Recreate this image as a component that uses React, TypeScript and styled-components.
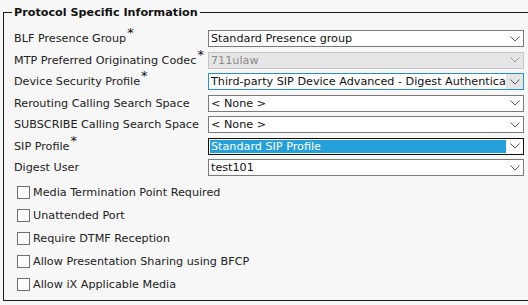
import React from "react";
import styled, { createGlobalStyle } from "styled-components";

const Global = createGlobalStyle`
  html, body {
    margin: 0;
    padding: 0;
    background: #f7f7f7;
    overflow: hidden;
  }
  body {
    font-family: "DejaVu Sans", Verdana, sans-serif;
    font-size: 11.2px;
    color: #222;
  }
`;

const Page = styled.div`
  width: 528px;
  height: 305px;
  overflow: hidden;
  background: #f7f7f7;
`;

const Fieldset = styled.fieldset`
  margin: 6px 0 0 3px;
  padding: 11px 0 4px 10px;
  width: 560px;
  border: 1px solid #1a1a1a;
  border-right: none;
  box-sizing: border-box;
  min-inline-size: 0;
`;

const Legend = styled.legend`
  margin-left: -2px;
  padding: 0 2px;
  font-weight: bold;
  font-size: 11.2px;
  color: #111;
  line-height: 13px;
`;

const Grid = styled.div`
  display: grid;
  grid-template-columns: 194px 316px;
  row-gap: 4.5px;
  align-items: center;
`;

const Label = styled.div`
  line-height: 17px;
  white-space: nowrap;
  color: #222;
`;

const Req = styled.span`
  display: inline-block;
  font-size: 13px;
  line-height: 0;
  vertical-align: 5px;
  margin-left: 1px;
  color: #111;
`;

type Variant = "normal" | "disabled" | "focused" | "selected";

const Box = styled.div<{ $v: Variant }>`
  position: relative;
  height: 17px;
  box-sizing: border-box;
  display: flex;
  align-items: center;
  border: 1px solid
    ${(p) =>
      p.$v === "disabled"
        ? "#c4c4c4"
        : p.$v === "focused"
        ? "#2a8fd0"
        : p.$v === "selected"
        ? "#111"
        : "#7a7a7a"};
  background: ${(p) => (p.$v === "disabled" ? "#e6e6e6" : "#fff")};
  overflow: hidden;
`;

const Value = styled.div<{ $v: Variant }>`
  flex: 1;
  min-width: 0;
  height: ${(p) => (p.$v === "selected" ? "13px" : "15px")};
  line-height: ${(p) => (p.$v === "selected" ? "13px" : "15px")};
  margin-left: ${(p) => (p.$v === "selected" ? "1px" : "0")};
  padding-left: ${(p) => (p.$v === "selected" ? "1px" : "2px")};
  white-space: nowrap;
  overflow: hidden;
  color: ${(p) =>
    p.$v === "disabled" ? "#8a8a8a" : p.$v === "selected" ? "#fff" : "#111"};
  background: ${(p) => (p.$v === "selected" ? "#26a0da" : "transparent")};
`;

const Arrow = styled.div<{ $v: Variant }>`
  flex: 0 0 17px;
  height: 100%;
  display: flex;
  align-items: center;
  justify-content: center;
  background: ${(p) => (p.$v === "focused" ? "#e5e5e5" : "transparent")};
`;

const Chevron = ({ color }: { color: string }) => (
  <svg width="10" height="6" viewBox="0 0 10 6">
    <path d="M0.5 0.5 L5 5 L9.5 0.5" fill="none" stroke={color} strokeWidth="1" />
  </svg>
);

const Select = ({ value, v = "normal" }: { value: string; v?: Variant }) => (
  <Box $v={v}>
    <Value $v={v}>{value}</Value>
    <Arrow $v={v}>
      <Chevron color={v === "disabled" ? "#9a9a9a" : "#5a5a5a"} />
    </Arrow>
  </Box>
);

const Checks = styled.div`
  display: flex;
  flex-direction: column;
  margin-top: 4.5px;
  padding-left: 3px;
`;

const CheckRow = styled.label`
  display: flex;
  align-items: center;
  height: 23px;
  gap: 3px;
  color: #222;
  white-space: nowrap;
`;

const CheckBox = styled.span`
  width: 13px;
  height: 13px;
  box-sizing: border-box;
  border: 1px solid #707070;
  background: #fdfdfd;
  flex: 0 0 13px;
`;

const rows: { label: string; req?: boolean; value: string; v?: Variant }[] = [
  { label: "BLF Presence Group", req: true, value: "Standard Presence group" },
  { label: "MTP Preferred Originating Codec", req: true, value: "711ulaw", v: "disabled" },
  {
    label: "Device Security Profile",
    req: true,
    value: "Third-party SIP Device Advanced - Digest Authentication",
    v: "focused",
  },
  { label: "Rerouting Calling Search Space", value: "< None >" },
  { label: "SUBSCRIBE Calling Search Space", value: "< None >" },
  { label: "SIP Profile", req: true, value: "Standard SIP Profile", v: "selected" },
  { label: "Digest User", value: "test101" },
];

const checks = [
  "Media Termination Point Required",
  "Unattended Port",
  "Require DTMF Reception",
  "Allow Presentation Sharing using BFCP",
  "Allow iX Applicable Media",
];

export default function App() {
  return (
    <Page>
      <Global />
      <Fieldset>
        <Legend>Protocol Specific Information</Legend>
        <Grid>
          {rows.map((r) => (
            <React.Fragment key={r.label}>
              <Label>
                {r.label}
                {r.req && <Req>*</Req>}
              </Label>
              <Select value={r.value} v={r.v} />
            </React.Fragment>
          ))}
        </Grid>
        <Checks>
          {checks.map((c) => (
            <CheckRow key={c}>
              <CheckBox />
              {c}
            </CheckRow>
          ))}
        </Checks>
      </Fieldset>
    </Page>
  );
}
